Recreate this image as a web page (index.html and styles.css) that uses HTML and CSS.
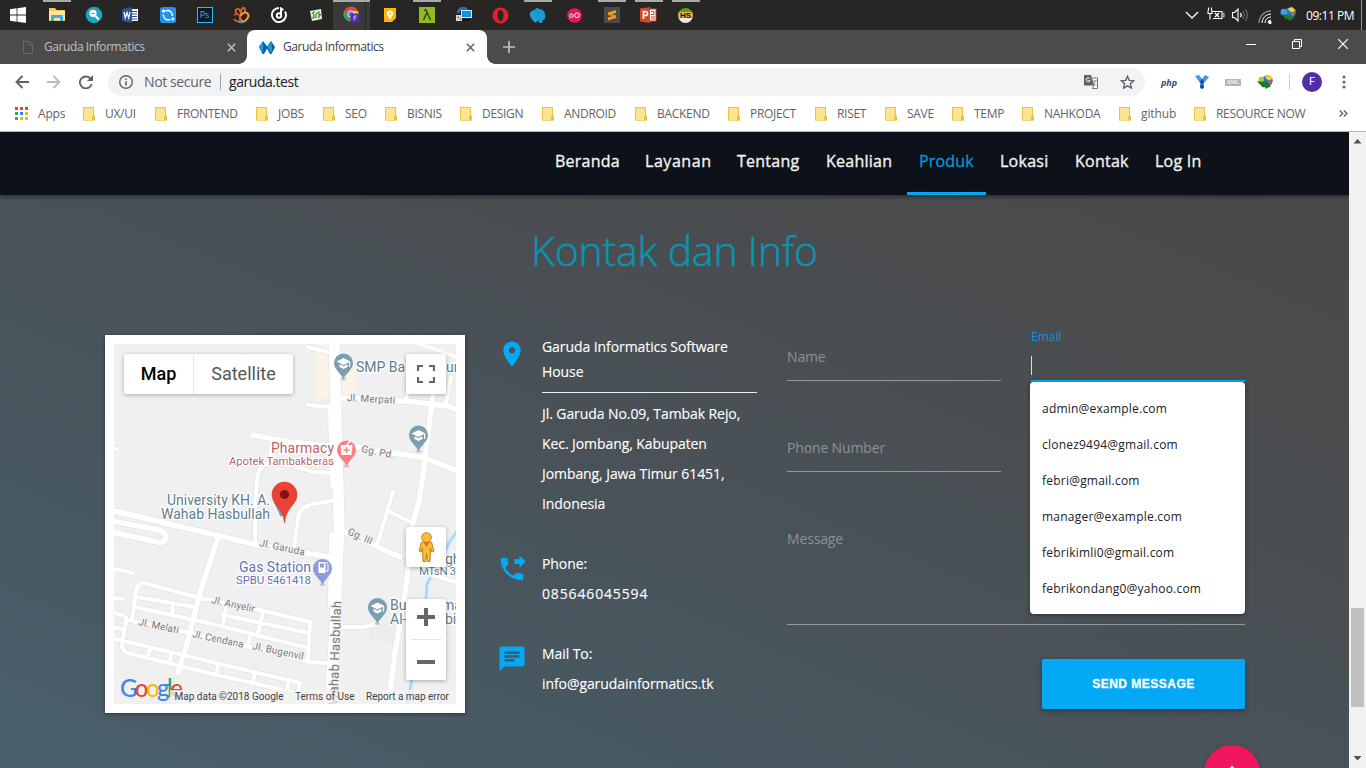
FILE: index.html
```html
<!DOCTYPE html>
<html lang="id">
<head>
<meta charset="utf-8">
<title>Garuda Informatics</title>
<link rel="stylesheet" href="styles.css">
</head>
<body>
<div class="screen">

<header class="taskbar">
  <div class="apps">
    <span class="app start"><svg width="16" height="16" viewBox="0 0 16 16" fill="#fff"><path d="M0 2.2 6.6 1.3V7.6H0zM7.4 1.2 16 0V7.6H7.4zM0 8.4h6.6v6.3L0 13.8zM7.4 8.4H16V16L7.4 14.8z"/></svg></span>
    <span class="app open"><svg width="18" height="16" viewBox="0 0 18 16"><path fill="#f5c65a" d="M1 1h6l1.5 2H17v11H1z"/><path fill="#fde59b" d="M1 4h16v9H1z"/><path fill="#3aaee6" d="M3 8h12v6h-3v-3H6v3H3z"/></svg></span>
    <span class="app"><svg width="18" height="18" viewBox="0 0 18 18"><circle cx="9" cy="9" r="8.3" fill="#18a5c8"/><circle cx="8" cy="7.3" r="3.6" fill="#fff"/><path d="m10.5 10 3.2 3.5" stroke="#fff" stroke-width="2"/><path d="M6.5 7.5h3" stroke="#18a5c8"/></svg></span>
    <span class="app"><svg width="17" height="16" viewBox="0 0 17 16"><path fill="#fff" d="M8 2h8v12H8z"/><path d="M9 4.500h6M9 7h6M9 9.500h6M9 12h6" stroke="#2a5699"/><path fill="#2a5699" d="M0 2 10 0v16L0 14z"/><path d="m2 5 1.300 6L5 5.500 6.700 11 8 5" fill="none" stroke="#fff" stroke-width="1.200"/></svg></span>
    <span class="app"><svg width="16" height="16" viewBox="0 0 16 16"><rect width="16" height="16" rx="2.500" fill="#1e93f0"/><path d="M5.500 4A5 5 0 0 1 12.500 9M10 12.500A5 5 0 0 1 3.300 7.500" fill="none" stroke="#fff" stroke-width="1.500"/><circle cx="3.500" cy="4" r="1.600" fill="#fff"/><circle cx="12.800" cy="12" r="1.600" fill="#fff"/></svg></span>
    <span class="app"><span class="ps">Ps</span></span>
    <span class="app"><svg width="17" height="17" viewBox="0 0 17 17" fill="none"><path d="M4 7Q1 3 4 2q3-1 4 5Q8 1 10.500 1 13 1 11.500 6" stroke="#e8622f" stroke-width="1.800"/><path d="M8 8q4-4 6.500-1.500T13 13q-3 3-5 0-2-3 0-5z" stroke="#eea43d" stroke-width="2"/><path d="M1 8q3-2 5 0t1 6Q3 15 1 12" stroke="#e5532d" stroke-width="1.700"/><path d="M4 14q4 3 9 0" stroke="#39a6c8" stroke-width="1.300"/></svg></span>
    <span class="app"><svg width="16" height="16" viewBox="0 0 16 16" fill="none" stroke="#fff" stroke-width="2"><path d="M8 1A7 7 0 1 0 14 4.500"/><circle cx="8" cy="8.500" r="2.200"/><path d="M10 8V1.500l2.500 1.500"/></svg></span>
    <span class="app"><svg width="14" height="14" viewBox="0 0 14 14"><path fill="#eef3e8" d="m1 3 11-2 1 10-10 2z"/><path d="M6 3.500 3.500 5 5 7l-1 3 3-1V6l3-2v3l1.500-.5L9 10" stroke="#4a9a2c" stroke-width="1.300" fill="none"/></svg></span>
    <span class="app open active"><svg width="18" height="18" viewBox="0 0 18 18"><circle cx="8" cy="8" r="7.500" fill="#e24a3b"/><path fill="#2ea853" d="M1.500 4.500 7 13l-1 2.500A7.500 7.500 0 0 1 1.500 4.500z"/><path fill="#fbc116" d="M15 5H9l1.500 7L8 15.500A7.500 7.500 0 0 0 15 5z"/><circle cx="8" cy="8" r="3.500" fill="#fff"/><circle cx="8" cy="8" r="2.700" fill="#4486f4"/><rect x="7.500" y="7.500" width="9" height="9" rx="1" fill="#512da8"/><path d="M11 14.500V10h2.500M11 12h2.500" stroke="#c9b8ef" fill="none"/></svg></span>
    <span class="app"><svg width="14" height="14" viewBox="0 0 14 14"><path fill="#fbb70f" d="M1 0h12v10l-4 4H1z"/><circle cx="7" cy="5.500" r="3" fill="#fff"/><circle cx="7" cy="5.500" r="1.500" fill="#fbd36b"/><path fill="#fff" d="M5.500 8h3v2.500h-3z"/></svg></span>
    <span class="app open"><svg width="16" height="16" viewBox="0 0 16 16"><path fill="#8fbc1e" d="M0 0h16v16H0z"/><path d="M5 3h2l4.500 10M7.700 6 4.500 13" fill="none" stroke="#2c3b0a" stroke-width="1.300"/></svg></span>
    <span class="app"><svg width="18" height="16" viewBox="0 0 18 16"><path d="M3 6c1-6 9-6 9-2" fill="none" stroke="#2e6fc9" stroke-width="2.500"/><path fill="#d8e6ee" d="M6 3h11v8H6z"/><path fill="#0794e4" d="M7 4h9v6H7z"/><path fill="#d9d3c8" d="M1 8h6v6H1z"/><path fill="#cc4132" d="M2.500 9.500H4V11H2.500z"/><path fill="#47973e" d="M4.500 11.500H6V13H4.500z"/><path fill="#090909" d="M8 12h7v1.500H8z"/></svg></span>
    <span class="app"><svg width="17" height="17" viewBox="0 0 17 17"><path fill="#e3202d" fill-rule="evenodd" d="M8.500.5a8 8 0 1 1 0 16 8 8 0 0 1 0-16zm0 2.500C4.500 3 4.500 14 8.500 14s4-11 0-11z"/></svg></span>
    <span class="app open"><svg width="17" height="17" viewBox="0 0 17 17" fill="#1b9cd3"><path d="M1 9C0 4 4 3 6 3c0-2 3-3 4-1 4 0 6 3 6 6v4l-2 1-1 3h-3v-2H8l-1 2-3-2-2-3z"/><path d="M6 4q4 0 4 4l-2 2" fill="none" stroke="#128bc2"/></svg></span>
    <span class="app"><svg width="15" height="15" viewBox="0 0 15 15"><circle cx="7.500" cy="7.500" r="7.300" fill="#e5195f"/><g fill="none" stroke="#fff"><circle cx="4.300" cy="7.800" r="1.700"/><circle cx="10" cy="7.300" r="2.300"/></g></svg></span>
    <span class="app open"><svg width="16" height="16" viewBox="0 0 16 16"><path fill="#4b4b4b" d="M0 0h16v16H0z"/><path fill="#f89a1c" d="M12 3v3L7.500 7.300 12 8.500V11l-8 2.500v-3L8.500 9 4 8V5.500z"/></svg></span>
    <span class="app open"><svg width="17" height="16" viewBox="0 0 17 16"><path fill="#fff" stroke="#d24726" d="M9 2h7v12H9z"/><path d="M11 4.500h3v3h-3M11 10h4M11 12h4" stroke="#d24726" fill="none"/><path fill="#d24726" d="M0 1.500 10 0v16L0 14.500z"/><path d="M3.500 12V4.500h2a2 2 0 0 1 0 4h-2" fill="none" stroke="#fff" stroke-width="1.700"/></svg></span>
    <span class="app open"><span class="hs">HS</span></span>
  </div>
  <div class="tray">
    <svg class="status" width="95" height="24" viewBox="0 0 95 24" fill="none" stroke="#fff" stroke-width="1.300">
      <path d="m6 9 6 6 6-6"/>
      <path d="M28 7.500v3h4v-3M28.500 4.500v3M31.500 4.500v3M30 10.500v6M32 8.500h10v7h-9" stroke-width="1.100"/><path d="M42.500 10.500h1.500v3h-1.500" stroke="#aaa"/><path d="m35 10 4 4M39 10l-4 4"/>
      <path d="M52.500 9.500h2l3.500-3.500v12l-3.500-3.500h-2z" stroke-width="1.100"/><path d="M60.500 10q1.500 2 0 4"/><path d="M63 8q2.500 4 0 8M65.500 6q3.500 6 0 12" stroke="#777" stroke-width="1"/>
      <path d="M79 20A12 12 0 0 1 91 8" stroke="#8a8a8a"/><path d="M82 20a9 9 0 0 1 9-9M85 20a6 6 0 0 1 6-6M88 20a3 3 0 0 1 3-3" stroke-width="1"/><circle cx="90" cy="19.500" r="1" fill="#fff"/>
    </svg>
    <svg class="idm" width="16" height="14" viewBox="0 0 17 15"><circle cx="11" cy="6" r="5.800" fill="#2577c9"/><path fill="#f4cf36" d="m8 2 5-2 4 4-5 2z"/><path fill="#e85832" d="M12 6h5l-5 5z"/><circle cx="4" cy="5.500" r="3.500" fill="#449ce8"/><path fill="#1c7a22" d="M2 8h5l3 2V7l5 5-6 3v-2H6z"/></svg>
    <span class="clock">09:11 PM</span>
    <i class="desktop-edge"></i>
  </div>
</header>

<div class="tabstrip">
  <div class="tab idle">
    <svg width="10" height="13" viewBox="0 0 10 13" fill="none" stroke="#6b6968"><path d="M.5.500H6L9.500 4v8.500h-9zM6 .500V4h3.500"/></svg>
    <span class="tab-title">Garuda Informatics</span>
    <svg width="9" height="9" viewBox="0 0 9 9" stroke="#bdc1c6" stroke-width="1.500"><path d="m.8.8 7.400 7.400M8.200.8.8 8.200"/></svg>
  </div>
  <div class="tab current">
    <svg class="favicon" width="16" height="13" viewBox="0 0 16 13"><path fill="#0b5f9e" d="M4 0 8 5.500 12 0l4 6-3.500 7H11L8 7.500 5 13H3.500L0 6z"/><path fill="#1d9be0" d="M4 0 0 6l3.500 7L4 6zM12 0 8.500 5.500 12.500 13l.5-7z"/></svg>
    <span class="tab-title">Garuda Informatics</span>
    <svg width="9" height="9" viewBox="0 0 9 9" stroke="#5f6368" stroke-width="1.500"><path d="m.8.8 7.400 7.400M8.200.8.8 8.200"/></svg>
  </div>
  <svg class="plus" width="12" height="12" viewBox="0 0 12 12" stroke="#bdc1c6" stroke-width="1.700"><path d="M6 0v12M0 6h12"/></svg>
  <div class="window-buttons">
    <svg width="10" height="10" viewBox="0 0 10 10" stroke="#fff"><path d="M0 5.500h10"/></svg>
    <svg width="10" height="10" viewBox="0 0 10 10" fill="none" stroke="#fff"><path d="M.5 2.500h7v7h-7zM2.500 2.500v-2h7v7h-2"/></svg>
    <svg width="10" height="10" viewBox="0 0 10 10" stroke="#fff" stroke-width="1.200"><path d="m0 0 10 10M10 0 0 10"/></svg>
  </div>
</div>

<div class="toolbar">
  <div class="nav-buttons">
    <svg width="14" height="14" viewBox="0 0 14 14" fill="none" stroke="#5f6368" stroke-width="1.900"><path d="M14 7H1.500M7.500 1l-6 6 6 6"/></svg>
    <svg width="14" height="14" viewBox="0 0 14 14" fill="none" stroke="#bababa" stroke-width="1.800"><path d="M0 7h12.500M6.500 1l6 6-6 6"/></svg>
    <svg width="14" height="14" viewBox="0 0 14 14"><path d="M12 4.300A6 6 0 1 0 12.700 9" fill="none" stroke="#5f6368" stroke-width="1.900"/><path d="M14 0v6H8z" fill="#5f6368"/></svg>
  </div>
  <div class="omnibox">
    <svg width="14" height="14" viewBox="0 0 14 14"><circle cx="7" cy="7" r="6.300" fill="none" stroke="#5f6368" stroke-width="1.400"/><path d="M6.200 6.200h1.600v4.300H6.200zM6.200 3.500h1.600v1.600H6.200z" fill="#5f6368"/></svg>
    <span class="insecure">Not secure</span>
    <span class="url">garuda.test</span>
    <svg class="translate" width="14" height="14" viewBox="0 0 14 14"><path fill="#5f6368" d="M0 0h7l3 10.500H0z"/><path fill="#fff" stroke="#777" d="M7.500 3h6v10.500h-5l1.500-3z"/><path d="M5.800 3.600a2 2 0 1 0 .2 2H4.500" fill="none" stroke="#fff"/><path d="M9 6h4M11 5v1q0 3-2.500 4.500M9.500 8l3 3" fill="none" stroke="#777" stroke-width=".8"/></svg>
    <svg class="star" width="15" height="14" viewBox="0 0 15 14" fill="none" stroke="#5f6368" stroke-width="1.400"><path d="m7.500 1.300 1.800 4.100 4.400.4-3.300 3 1 4.300-3.900-2.300-3.900 2.300 1-4.300-3.300-3 4.400-.4z"/></svg>
  </div>
  <div class="extensions">
    <span class="php">php</span>
    <svg width="14" height="14" viewBox="0 0 14 14"><path fill="#3d9bea" d="M0 1 4 0l3 4 3-4 4 2-5 6v5l-2 1-2-1V8z"/><path fill="#1b3e8a" d="m7 4 2 3-2 2-2-2zM7 9l2 3-2 2-2-2z"/></svg>
    <span class="xml">XML</span>
    <svg width="16" height="14" viewBox="0 0 17 15"><circle cx="11" cy="6" r="5.800" fill="#2577c9"/><path fill="#f4cf36" d="m8 2 5-2 4 4-5 2z"/><path fill="#e85832" d="M12 6h5l-5 5z"/><circle cx="4.500" cy="5" r="3" fill="#a9c94a"/><path fill="#1c7a22" d="M0 7h7l3 2V7l5 5-6 3v-2H6z"/></svg>
  </div>
  <i class="separator"></i>
  <span class="avatar">F</span>
  <svg class="kebab" width="4" height="14" viewBox="0 0 4 14" fill="#5f6368"><circle cx="2" cy="2" r="1.500"/><circle cx="2" cy="7" r="1.500"/><circle cx="2" cy="12" r="1.500"/></svg>
</div>

<nav class="bookmarks">
  <svg class="apps-grid" width="13" height="13" viewBox="0 0 13 13"><path fill="#ea4335" d="M0 0h3v3H0zM5 0h3v3H5zM10 0h3v3h-3z"/><path fill="#34a853" d="M0 5h3v3H0zM0 10h3v3H0z"/><path fill="#1a8cf0" d="M5 5h3v3H5z"/><path fill="#fbb505" d="M10 5h3v3h-3zM5 10h3v3H5zM10 10h3v3h-3z"/></svg>
  <span class="apps-label">Apps</span>
  <div class="folders">
    <span class="bm">UX/UI</span><span class="bm">FRONTEND</span><span class="bm">JOBS</span><span class="bm">SEO</span><span class="bm">BISNIS</span><span class="bm">DESIGN</span><span class="bm">ANDROID</span><span class="bm">BACKEND</span><span class="bm">PROJECT</span><span class="bm">RISET</span><span class="bm">SAVE</span><span class="bm">TEMP</span><span class="bm">NAHKODA</span><span class="bm github">github</span><span class="bm">RESOURCE NOW</span>
  </div>
  <svg class="overflow" width="9" height="7" viewBox="0 0 9 7" fill="none" stroke="#5f6368" stroke-width="1.400"><path d="m.7.500 3 3-3 3M4.900.500l3 3-3 3"/></svg>
</nav>

<div class="viewport">
  <div class="page">
    <nav class="site-nav">
      <a class="link">Beranda</a><a class="link wide">Layanan</a><a class="link">Tentang</a><a class="link">Keahlian</a><a class="link selected">Produk</a><a class="link">Lokasi</a><a class="link">Kontak</a><a class="link">Log In</a>
    </nav>
    <section class="contact">
      <h2 class="title">Kontak dan Info</h2>
      <div class="columns">
        <div class="map-card">
          <div class="map">
            <svg class="map-art" width="342" height="360" viewBox="0 0 342 360">
              <defs>
                <g id="pin"><ellipse cx="0" cy="16" rx="3" ry="1.500" fill="#ccc"/><path d="M0 16.500C-1.500 11-9.500 7-9.500 0a9.500 9.500 0 0 1 19 0C9.500 7 1.500 11 0 16.500z"/></g>
                <g id="cap" fill="#fff"><path d="m0-5 7 3.500L0 2l-7-3.500z"/><path d="M-4 1.200 0 3.200l4-2V4L0 6-4 4zM5.500-1h1.200v5H5.500z"/></g>
                <g id="streets" fill="none" stroke-linecap="round" stroke-linejoin="round">
                  <g class="s4"><path d="M216 61 218 143M217 190 216 262M193 3 214 8M194 61 216 63M292 56 294 46M332 59 337 33M158 96 156 118M176 121 156 119Q148 120 145 127Q142 132 141 176V198M176 121 199 128 219 129M223 156 199 160Q188 163 185 169L180 203M279 148 263 201M276 168 299 179M-3 103 3 105M-3 224 19 229M-3 253 9 255M229 283H250L266 279M318 231 342 238"/>
                  <path d="M18 276 22 248Q23 238 30 239L86 254 146 266 196 278 194 318 213 319M23 253 80 263M109 271 195 289M21 263 103 281 194 304M13 276 76 289 136 303 196 318M59 259 58 271M112 264 109 280M149 268 143 293M136 292 134 302M-3 294 69 311 186 339 183 352M-3 268 8 271Q14 272 12 279L8 299Q7 306 13 309L103 331 205 354M-3 283 9 285M36 305 34 313M57 309 56 318M104 321 102 331M141 329 139 338M175 336 173 346"/></g>
                  <g class="s5"><path d="M228 54 300 58 333 62 345 66M319 49 311 116 305 158 299 178 293 236 281 309 274 362M139 91 176 98 223 103 243 103 311 114 345 128M226 186 286 213M-3 177 46 186Q55 191 50 197Q48 200 43 198L-3 188M104 193 86 249 74 296 64 329"/><path d="M-3 166 59 181 106 192 143 201 222 214"/></g>
                </g>
                <path id="main-road" d="M220-3 222 60 225 180 224 205 222 265 216 363" fill="none"/>
              </defs>
              <path fill="#f0f0f0" d="M0 0h342v360H0z"/>
              <path fill="#fbf4e6" d="M203 0h13v54h-15zM228 22h15l-1 32-14 8z"/>
              <path d="M257 281 275 277 285 283 282 300 254 297z" fill="#ebeef1"/>
              <path d="M345 184 335 199 313 240 312 254 297 340 293 362" fill="none" stroke="#a9daff" stroke-width="3"/>
              <path d="M300-2 345 14" stroke="#fff" stroke-width="2.500"/>
              <use href="#streets" class="casing"/><use href="#main-road" stroke="#e4e4e4" stroke-width="12.500"/>
              <use href="#streets" class="road"/><use href="#main-road" stroke="#fff" stroke-width="11"/>
              <g class="street">
                <text transform="translate(233 57) rotate(3)" textLength="48">Jl. Merpati</text>
                <text transform="translate(247 108) rotate(11)" textLength="33">Gg. Pd.</text>
                <text transform="translate(145 202) rotate(12)" textLength="46">Jl. Garuda</text>
                <text transform="translate(233 190) rotate(24)" textLength="26">Gg. III</text>
                <text transform="translate(97 259) rotate(12)" textLength="44">Jl. Anyelir</text>
                <text transform="translate(24 281) rotate(12)" textLength="41">Jl. Melati</text>
                <text transform="translate(78 293) rotate(12)" textLength="52">Jl. Cendana</text>
                <text transform="translate(138 305) rotate(12)" textLength="52">Jl. Bugenvil</text>
                <text transform="translate(223.500 361) rotate(-88)" textLength="104" class="trunk">Wahab Hasbullah</text>
              </g>
              <g class="poi">
                <g class="teal"><text x="242" y="28">SMP Ba</text><text x="332" y="28">un</text>
                <text x="53" y="161" textLength="103">University KH. A.</text><text x="47" y="175" textLength="109">Wahab Hasbullah</text>
                <text x="276" y="266">Bu</text><text x="328" y="266">ma</text><text x="276" y="280">Al-</text><text x="331" y="280">bi</text>
                <text x="331" y="220">gh</text><text class="sub" x="305" y="231" textLength="37">MTsN 3</text></g>
                <g class="rose"><text x="157" y="109" textLength="63">Pharmacy</text><text class="sub" x="115" y="121" textLength="105">Apotek Tambakberas</text></g>
                <g class="iris"><text x="125" y="228" textLength="72">Gas Station</text><text class="sub" x="122" y="240" textLength="75">SPBU 5461418</text></g>
              </g>
              <g fill="#7b9eb0"><use href="#pin" x="229.500" y="19"/><use href="#pin" x="304.500" y="91"/><use href="#pin" x="263.500" y="263.500"/></g>
              <use href="#cap" x="229.500" y="19"/><use href="#cap" x="304.500" y="91"/><use href="#cap" x="263.500" y="263.500"/>
              <use href="#pin" x="232.500" y="106" fill="#f88181"/><path fill="#fff" d="M226.500 101h12l-1 10h-10z"/><path fill="#f88181" d="M231.800 103h1.400v2.300h2.300v1.400h-2.300v2.300h-1.400v-2.300h-2.300v-1.400h2.300z"/><path d="m232.500 101 4-4" stroke="#fff" stroke-width="1.500"/>
              <use href="#pin" x="208.500" y="224.500" fill="#8e99e0"/><path fill="#fff" d="M204.500 218h7v11h-7z"/><path fill="#8e99e0" d="M206 219.500h4v4h-4z"/><path d="m212 218 2 2v7h-2" fill="none" stroke="#fff"/>
              <path d="M161 157 168 172" stroke="#7b9eb0" stroke-width="3"/>
              <path fill="#ea4335" stroke="#d2382b" stroke-width=".6" d="M170.500 179C169 163 158 161 158 150.500a12.500 12.500 0 0 1 25 0C183 161 172 163 170.500 179z"/><circle cx="170.500" cy="150.500" r="4.600" fill="#811411"/>
              <text class="google" x="6" y="353" textLength="63"><tspan fill="#4285f4">G</tspan><tspan fill="#ea4335">o</tspan><tspan fill="#fbbc05">o</tspan><tspan fill="#4285f4">g</tspan><tspan fill="#34a853">l</tspan><tspan fill="#ea4335">e</tspan></text>
              <path fill="#f3f3f3" fill-opacity=".75" d="M56 346h286v14H56z"/>
              <g class="credit"><text x="60.500" y="356" textLength="109">Map data ©2018 Google</text><text x="181" y="356" textLength="59.500">Terms of Use</text><text x="252" y="356" textLength="83">Report a map error</text></g>
            </svg>
            <div class="map-types"><span class="type chosen">Map</span><span class="type">Satellite</span></div>
            <div class="map-tools">
              <span class="tool"><svg width="18" height="18" viewBox="0 0 18 18" fill="none" stroke="#666" stroke-width="2.200"><path d="M1 6V1h5M12 1h5v5M17 12v5h-5M6 17H1v-5"/></svg></span>
              <div class="tools-low">
                <span class="tool"><svg width="17" height="30" viewBox="0 0 17 30" fill="#fbc02d" stroke="#b3812f"><path d="M3.500 10h10l2.500 9-2 1-1.500-4-.5 13.500H9.300L8.500 21l-.8 8.500H5L4.500 16 3 20l-2-1z"/><circle cx="8.500" cy="5.500" r="4.800"/><path fill="#e57420" stroke="none" d="M5 10h7l-3.500 5z"/></svg></span>
                <div class="zoom"><svg width="18" height="18" viewBox="0 0 18 18" stroke="#666" stroke-width="4"><path d="M9 0v18M0 9h18"/></svg><i class="rule"></i><svg width="18" height="18" viewBox="0 0 18 18" stroke="#666" stroke-width="4"><path d="M0 9h18"/></svg></div>
              </div>
            </div>
          </div>
        </div>

        <div class="info">
          <div class="entry">
            <svg class="glyph" viewBox="0 0 24 24"><path d="M12 2C8.130 2 5 5.130 5 9c0 5.250 7 13 7 13s7-7.750 7-13c0-3.870-3.130-7-7-7zm0 9.500a2.500 2.500 0 0 1 0-5 2.500 2.500 0 0 1 0 5z"/></svg>
            <div class="lines"><p class="company">Garuda Informatics Software<br>House</p>
              <p class="line">Jl. Garuda No.09, Tambak Rejo,</p><p class="line">Kec. Jombang, Kabupaten</p><p class="line">Jombang, Jawa Timur 61451,</p><p class="line">Indonesia</p></div>
          </div>
          <div class="entry">
            <svg class="glyph" viewBox="0 0 24 24"><path d="m18 11 5-5-5-5v3h-4v4h4v3zm2 4.500c-1.250 0-2.450-.2-3.570-.570-.350-.110-.740-.030-1.020.240l-2.200 2.200c-2.830-1.440-5.150-3.750-6.590-6.590l2.200-2.210c.280-.260.360-.650.250-1C8.700 6.450 8.500 5.250 8.500 4c0-.550-.450-1-1-1H4c-.550 0-1 .450-1 1 0 9.390 7.610 17 17 17 .550 0 1-.450 1-1v-3.500c0-.550-.450-1-1-1z"/></svg>
            <div class="lines"><p class="line">Phone:</p><p class="line digits">085646045594</p></div>
          </div>
          <div class="entry">
            <svg class="glyph" viewBox="0 0 24 24"><path d="M20 2H4c-1.100 0-1.990.9-1.990 2L2 22l4-4h14c1.100 0 2-.9 2-2V4c0-1.100-.9-2-2-2zM6 9h12v2H6V9zm8 5H6v-2h8v2zm4-6H6V6h12v2z"/></svg>
            <div class="lines"><p class="line">Mail To:</p><p class="line">info@garudainformatics.tk</p></div>
          </div>
        </div>

        <form class="form">
          <label class="field">Name</label>
          <div class="field focused"><span class="float-label">Email</span><i class="caret"></i>
            <ul class="suggestions"><li>admin@example.com</li><li>clonez9494@gmail.com</li><li>febri@gmail.com</li><li>manager@example.com</li><li>febrikimli0@gmail.com</li><li>febrikondang0@yahoo.com</li></ul>
          </div>
          <label class="field phone">Phone Number</label>
          <label class="field message">Message</label>
          <span class="send">SEND MESSAGE</span>
        </form>
      </div>
    </section>
    <span class="to-top"><svg width="16" height="16" viewBox="0 0 16 16" fill="none" stroke="#fff" stroke-width="2"><path d="m2 8 6-6 6 6M8 2v14"/></svg></span>
  </div>
  <div class="scrollbar"><svg width="9" height="5" viewBox="0 0 9 5" fill="#505050"><path d="M4.500 0 8.500 4.500h-8z"/></svg><i class="thumb"></i><svg width="9" height="5" viewBox="0 0 9 5" fill="#505050"><path d="M4.500 4.500 8.500 0h-8z"/></svg></div>
</div>
</div>
</body>
</html>
```
FILE: styles.css
```css
*, *::before, *::after { box-sizing: border-box; }
body { margin: 0; overflow: hidden; font-family: "Open Sans", "Noto Sans", sans-serif; }
p, h2, ul { margin: 0; padding: 0; }
svg { display: block; flex: none; }
.screen { width: 1366px; height: 768px; display: flex; flex-direction: column; overflow: hidden; }

/* taskbar */
.taskbar { height: 30px; background: #272624; display: flex; justify-content: space-between; flex: none; }
.apps { display: flex; }
.app { width: 37px; height: 30px; display: flex; align-items: center; justify-content: center; border-top: 2px solid transparent; padding-bottom: 2px; background-clip: padding-box; }
.app.start { width: 38px; padding-right: 2px; }
.app.open { border-image: linear-gradient(90deg, transparent 5px, #aaa 5px, #aaa 33px, transparent 33px) 2 0 0 0; }
.app.active { background: linear-gradient(90deg, #3b3a39 32px, #272624 32px, #272624 33px, #3b3a39 33px); border-image: none; border-top-color: #aaa; background-clip: border-box; margin-right: 1px; margin-left: -1px; }
.ps { width: 16px; height: 16px; border: 1px solid #35b4f5; background: #0a1c2a; color: #35b4f5; font: 9px/14px "Open Sans", sans-serif; text-align: center; }
.hs { width: 15px; height: 15px; border-radius: 50%; background: linear-gradient(#53a51b 30%, #e2b24c 30% 70%, #e9e9e9 70%); font: bold 8px/15px "Liberation Sans", sans-serif; text-align: center; color: #111; }
.tray { display: flex; align-items: center; color: #fff; }
.status { margin-right: 5px; }
.idm { margin: 0 0 2px; }
.clock { font-size: 12px; letter-spacing: -.45px; margin-left: 10px; width: 55px; white-space: nowrap; }
.desktop-edge { width: 1px; height: 30px; background: #999; margin-right: 4px; }

/* tab strip */
.tabstrip { height: 34px; background: #4d4b49; display: flex; align-items: center; flex: none; }
.tab { height: 34px; display: flex; align-items: center; font-size: 12px; }
.tab-title { flex: 1; letter-spacing: -.42px; padding-bottom: 1px; }
.tab.idle { width: 247px; padding: 0 11px 0 23px; color: #bdc1c6; }
.idle .tab-title { margin-left: 11px; }
.tab.current { width: 240px; background: #fff; border-radius: 8px 8px 0 0; padding: 0 12px; color: #3c4043; position: relative; }
.current .tab-title { margin-left: 8px; }
.tab.current::before, .tab.current::after { content: ""; position: absolute; bottom: 0; width: 8px; height: 8px; }
.tab.current::before { left: -8px; background: radial-gradient(circle at 0 0, transparent 7.5px, #fff 8px); }
.tab.current::after { right: -8px; background: radial-gradient(circle at 100% 0, transparent 7.5px, #fff 8px); }
.plus { margin-left: 16px; }
.window-buttons { margin: 0 18px 6px auto; display: flex; gap: 36px; }

/* toolbar */
.toolbar { height: 36px; background: #fff; display: flex; align-items: center; flex: none; padding: 0 20px 0 15px; }
.nav-buttons { display: flex; gap: 18px; width: 93px; }
.omnibox { width: 1037px; height: 28px; border-radius: 14px; background: #f1f3f4; display: flex; align-items: center; padding: 0 11px; font-size: 14px; }
.insecure { color: #5f6368; margin-left: 11px; width: 77px; border-right: 1px solid #9aa0a6; line-height: 16px; white-space: nowrap; letter-spacing: -.38px; }
.url { color: #202124; margin-left: 8px; letter-spacing: -.45px; padding-bottom: 1px; }
.translate { margin-left: auto; margin-right: 22px; }
.star { margin-right: -1px; }
.extensions { display: flex; align-items: center; width: 128px; margin-left: 16px; }
.php { font: italic bold 9px "Open Sans", sans-serif; color: #3a4676; width: 34px; }
.xml { background: #b5b5b5; color: #eee; font: bold 6px/7px "Liberation Sans", sans-serif; width: 16px; text-align: center; margin: 0 16px 0 16px; }
.separator { width: 1px; height: 16px; background: #ccc; margin-right: 12px; }
.avatar { width: 20px; height: 20px; border-radius: 50%; background: #512da8; color: #fff; font: 11px/20px Roboto, sans-serif; text-align: center; }
.kebab { margin-left: auto; }

/* bookmarks */
.bookmarks { height: 32px; flex: none; background: #fff; border-bottom: 1px solid #b3b3b1; display: flex; align-items: center; padding-left: 15px; font-size: 12px; color: #5f6368; white-space: nowrap; padding-bottom: 4px; }
.apps-label { width: 45px; margin-left: 10px; letter-spacing: -.2px; }
.folders { display: grid; grid-template-columns: 72px 101px 67px 62px 75px 82px 93px 93px 87px 70px 67px 70px 97px 75px 140px; width: 1256px; letter-spacing: -.3px; }
.bm { display: flex; align-items: center; gap: 10px; }
.bm::before { content: ""; width: 12px; height: 14px; background: linear-gradient(#e6c440, #e6c440) 8px 8px / 1px 5px no-repeat, #fee391; border: 1px solid #e6c440; clip-path: polygon(0 0, 11px 0, 11px 9px, 12px 9px, 12px 14px, 0 14px); box-shadow: inset -1px 0 #e6c440; }
.github { letter-spacing: -.1px; }

/* page */
.viewport { flex: 1; display: flex; min-height: 0; }
.page { width: 1349px; height: 636px; overflow: hidden; position: relative; background: linear-gradient(203deg, #4a4949 8%, #4a4f53 40%, #48555d 65%, #48606c 100%); }
.site-nav { height: 63px; background: #0d1119; display: grid; grid-template-columns: 90px 92px 89px 93px 81px 75px 80px 72px; padding-left: 543px; box-shadow: 0 2px 4px rgba(0,0,0,.4); position: relative; font-size: 16px; letter-spacing: .25px; color: #f2f2f2; -webkit-text-stroke: .35px; }
.link { padding-left: 12px; line-height: 58px; white-space: nowrap; }
.wide { letter-spacing: .55px; }
.link.selected { color: #0b93d8; border-bottom: 3px solid #03a9f4; margin-right: 2px; letter-spacing: .15px; }
.title { font-weight: 300; font-size: 41px; line-height: 60px; margin-top: 25px; text-align: center; color: #0b93b0; letter-spacing: -.2px; -webkit-text-stroke: .5px; }
.columns { display: grid; grid-template-columns: 360px 261px 458px; padding-left: 105px; margin-top: 55px; align-items: start; }
.info { margin-left: 32px; }
.form { margin-left: 61px; }

.map-card { background: #fff; padding: 9px; height: 378px; box-shadow: 0 1px 4px rgba(0,0,0,.4); }
.map { position: relative; width: 342px; height: 360px; overflow: hidden; font-family: Roboto, sans-serif; }
.casing { stroke: #e4e4e4; --grow: 1.5px; }
.road { stroke: #fff; --grow: 0px; }
.s4 { stroke-width: calc(4px + var(--grow)); }
.s5 { stroke-width: calc(5.5px + var(--grow)); }
.street, .poi { paint-order: stroke; stroke: #fff; stroke-width: 2.5px; stroke-linejoin: round; }
.street { font-size: 10px; fill: #75797c; stroke: #f4f4f4; }
.trunk { font-size: 13px; }
.poi { font-size: 14px; }
.sub { font-size: 11.5px; }
.teal { fill: #5f7d8c; }
.rose { fill: #bd6266; }
.iris { fill: #6670b5; }
.google { font: 500 24px Lato, sans-serif; }
.credit { font-size: 10px; fill: #444; }
.map-types { position: absolute; left: 10px; top: 10px; display: flex; background: #fff; border-radius: 2px; box-shadow: 0 1px 4px rgba(0,0,0,.3); height: 40px; line-height: 40px; font-size: 18px; color: #565656; }
.type { width: 99px; text-align: center; }
.type.chosen { width: 70px; color: #000; font-weight: 500; border-right: 1px solid #e6e6e6; }
.map-tools { position: absolute; left: 292px; top: 10px; height: 326px; display: flex; flex-direction: column; justify-content: space-between; }
.tools-low { display: grid; gap: 32px; }
.tool, .zoom { width: 40px; height: 40px; background: #fff; border-radius: 2px; box-shadow: 0 1px 4px rgba(0,0,0,.3); display: flex; align-items: center; justify-content: center; }
.zoom { height: 81px; flex-direction: column; justify-content: space-between; padding: 9px 0; }
.rule { width: 30px; height: 1px; background: #e6e6e6; }

.entry { display: flex; margin-bottom: 30px; color: #fff; font-size: 14px; letter-spacing: -.08px; -webkit-text-stroke: .12px; }
.glyph { width: 30px; height: 30px; fill: #03a9f4; margin: 5px 15px 0 0; }
.lines { width: 215px; flex: none; white-space: nowrap; }
.company { line-height: 25px; border-bottom: 1px solid #eee; padding-bottom: 8px; margin-bottom: 6px; }
.entry:first-child { margin-top: -1px; }
.line { line-height: 30px; }
.digits { letter-spacing: .85px; }

.form { display: grid; grid-template-columns: 214px 214px; column-gap: 30px; font-size: 14px; letter-spacing: -.15px; color: #8e9091; }
.field { height: 46px; line-height: 44px; border-bottom: 1px solid #999; margin-bottom: 45px; display: block; }
.focused { border-bottom: 2px solid #03a9f4; position: relative; height: 47px; margin-bottom: 44px; }
.float-label { position: absolute; top: -9px; left: 0; font-size: 12px; letter-spacing: 0; line-height: 22px; color: #0b93d8; }
.caret { position: absolute; left: 0; top: 21px; width: 1px; height: 19px; background: #ddd; }
.suggestions { position: absolute; top: 47px; left: -1px; width: 215px; background: #fff; border-radius: 4px; padding: 9px 0 7px; list-style: none; font-size: 12px; letter-spacing: .22px; line-height: 36px; color: #202124; box-shadow: 0 1px 4px rgba(0,0,0,.4); z-index: 2; }
.suggestions li { padding-left: 12px; }
.message { grid-column: 1 / 3; height: 108px; margin-bottom: 34px; }
.phone { grid-column: 1; }
.send { grid-column: 1 / 3; justify-self: end; width: 203px; height: 50px; border-radius: 2px; background: #03a9f4; box-shadow: 0 2px 5px rgba(0,0,0,.35); color: #fff; text-align: center; font: bold 12px/50px "Liberation Sans", sans-serif; letter-spacing: .5px; -webkit-text-stroke: .3px; }
.to-top { position: absolute; left: 1204px; top: 613px; width: 56px; height: 56px; border-radius: 50%; background: #f0165e; display: flex; justify-content: center; padding-top: 20px; box-shadow: 0 2px 5px rgba(0,0,0,.35); }
.scrollbar { width: 17px; background: #f1f1f1; display: flex; flex-direction: column; align-items: center; padding: 7px 0; }
.thumb { width: 13px; height: 99px; background: #c1c1c1; margin: 464px 0 auto; }
```
